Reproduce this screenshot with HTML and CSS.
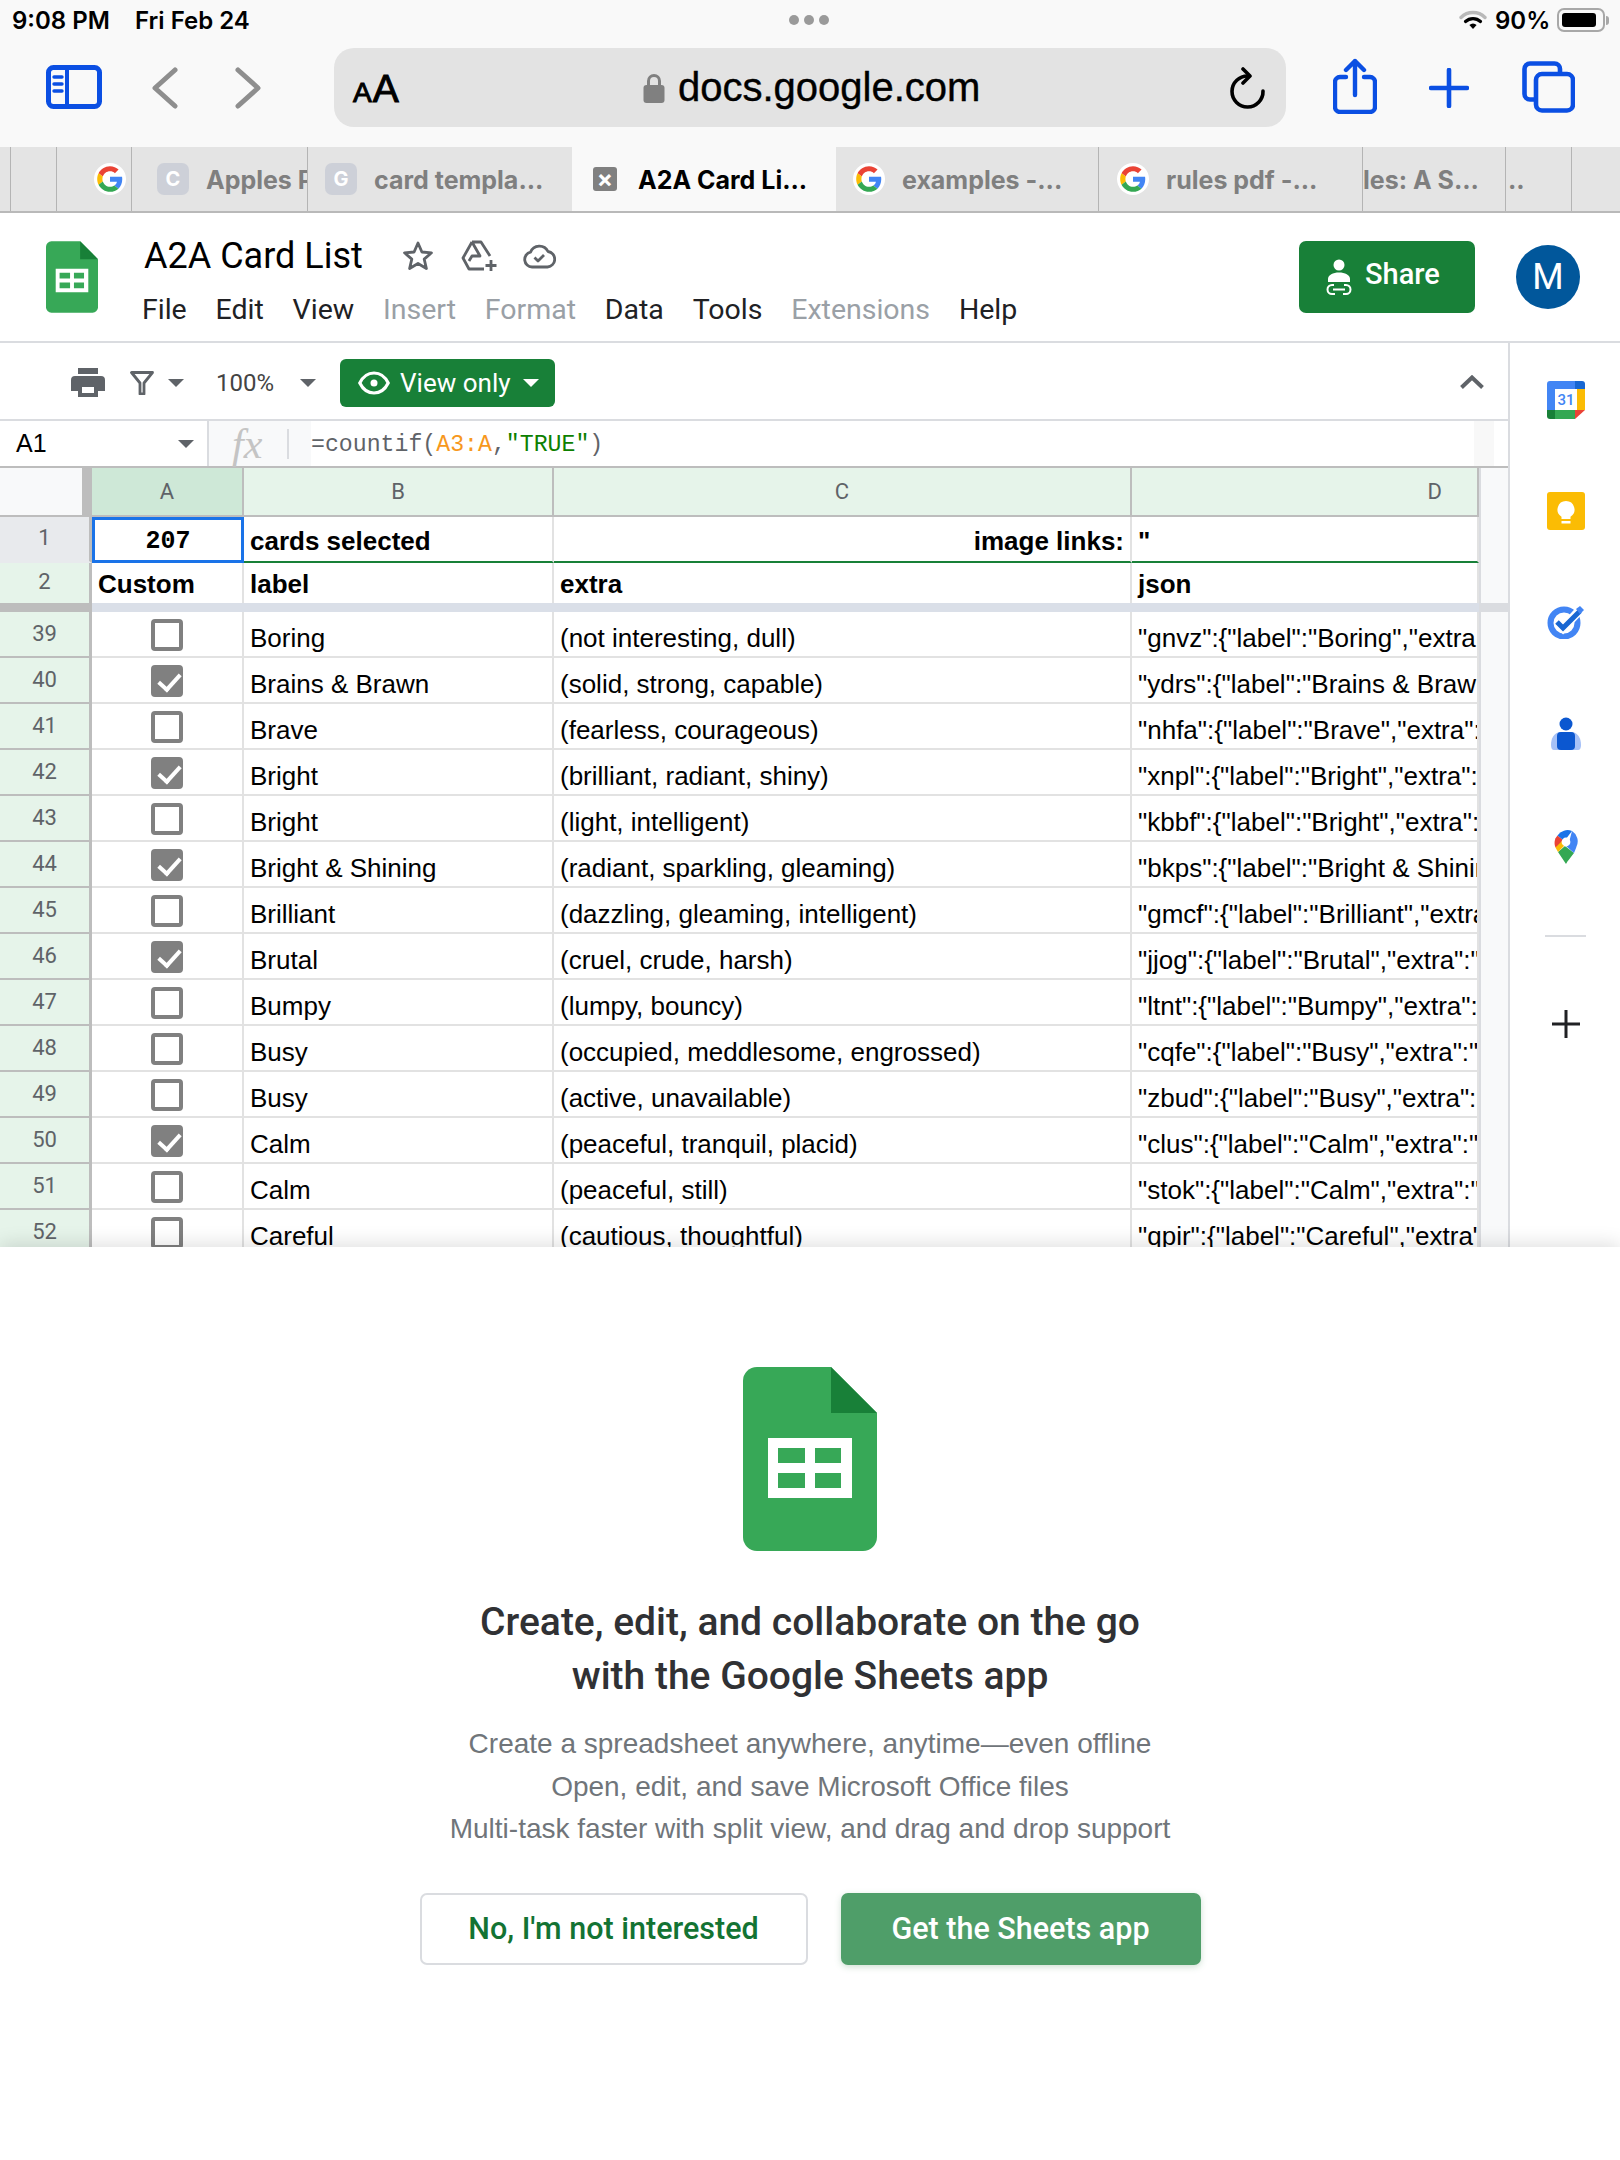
FILE: index.html
```html
<!DOCTYPE html>
<html lang="en">
<head>
  <meta charset="UTF-8">
  <title>A2A Card List</title>
  <link rel="stylesheet" href="styles.css">
</head>
<body>
  <svg class="defs" width="0" height="0">
    <symbol id="g-logo" viewBox="-6 -6 60 60">
      <circle cx="24" cy="24" r="30" fill="#fff"/>
      <path fill="#EA4335" d="M24 9.5c3.54 0 6.71 1.22 9.21 3.6l6.85-6.85C35.9 2.38 30.47 0 24 0 14.62 0 6.51 5.38 2.56 13.22l7.98 6.19C12.43 13.72 17.74 9.5 24 9.5z"/>
      <path fill="#4285F4" d="M46.98 24.55c0-1.57-.15-3.09-.38-4.55H24v9.02h12.94c-.58 2.96-2.26 5.48-4.78 7.18l7.73 6c4.51-4.18 7.09-10.36 7.09-17.65z"/>
      <path fill="#FBBC05" d="M10.53 28.59c-.48-1.45-.76-2.99-.76-4.59s.27-3.14.76-4.59l-7.98-6.19C.92 16.46 0 20.12 0 24c0 3.88.92 7.54 2.56 10.78l7.97-6.19z"/>
      <path fill="#34A853" d="M24 48c6.48 0 11.93-2.13 15.89-5.81l-7.73-6c-2.15 1.45-4.92 2.3-8.16 2.3-6.26 0-11.57-4.22-13.47-9.91l-7.98 6.19C6.51 42.62 14.62 48 24 48z"/>
    </symbol>
    <symbol id="sheets-logo" viewBox="0 0 134 184">
      <path fill="#37a857" d="M88 0H14A14 14 0 0 0 0 14v156a14 14 0 0 0 14 14h106a14 14 0 0 0 14-14V46z"/>
      <path fill="#188038" d="M88 0l46 46H88z"/>
      <path fill="#fff" fill-rule="evenodd" d="M25 71h84v60H25zM35 81v15h27V81zM72 81v15h26V81zM35 106v15h27v-15zM72 106v15h26v-15z"/>
    </symbol>
  </svg>

  <div class="page">
    <div class="statusbar">
      <span class="time">9:08 PM</span>
      <span class="date">Fri Feb 24</span>
      <span class="dots"><i></i><i></i><i></i></span>
      <svg class="wifi" width="28" height="20" viewBox="0 0 28 20" fill="none" stroke-linecap="round">
        <path d="M2 7.5a17 17 0 0 1 24 0" stroke="#b9b9b9" stroke-width="3.4"/>
        <path d="M6.5 11.5a11 11 0 0 1 15 0" stroke="#000" stroke-width="3.2"/>
        <path d="M14 19l-3.6-4a5 5 0 0 1 7.2 0z" fill="#000"/>
      </svg>
      <span class="pct">90%</span>
      <span class="battery"><i></i></span>
      <span class="nub"></span>
    </div>

    <div class="toolbar">
      <svg class="ic-side" width="56" height="44" viewBox="0 0 56 44" fill="none" stroke="#0b4fe3">
        <rect x="2.5" y="2.5" width="51" height="39" rx="5" stroke-width="5"/>
        <path d="M21 3v38" stroke-width="4"/>
        <path d="M8 12h8M8 19h8M8 26h8" stroke-width="3.4" stroke-linecap="round"/>
      </svg>
      <svg class="ic-back" width="26" height="42" viewBox="0 0 26 42" fill="none" stroke="#8e8e8e" stroke-width="5" stroke-linecap="round" stroke-linejoin="round">
        <path d="M23 3L3 21l20 18"/>
      </svg>
      <svg class="ic-fwd" width="26" height="42" viewBox="0 0 26 42" fill="none" stroke="#8e8e8e" stroke-width="5" stroke-linecap="round" stroke-linejoin="round">
        <path d="M3 3l20 18L3 39"/>
      </svg>
      <div class="urlbar">
        <span class="aa"><small>A</small>A</span>
        <svg class="lock" width="22" height="30" viewBox="0 0 22 30">
          <path d="M5.5 13V8a5.5 5.5 0 0 1 11 0v5" fill="none" stroke="#808080" stroke-width="3"/>
          <rect x="0.5" y="12" width="21" height="18" rx="3" fill="#808080"/>
        </svg>
        <span class="host">docs.google.com</span>
        <svg class="reload" width="36" height="42" viewBox="0 0 36 42" fill="none" stroke="#000" stroke-width="3.6" stroke-linecap="round" stroke-linejoin="round">
          <path d="M18 9A15.5 15.5 0 1 0 33 24"/>
          <path d="M13 2l7 7-7 7"/>
        </svg>
      </div>
      <svg class="ic-share" width="44" height="56" viewBox="0 0 44 56" fill="none" stroke="#0b4fe3" stroke-width="4.4" stroke-linecap="round" stroke-linejoin="round">
        <path d="M13 19H7a5 5 0 0 0-5 5v25a5 5 0 0 0 5 5h30a5 5 0 0 0 5-5V24a5 5 0 0 0-5-5h-6"/>
        <path d="M22 37V3M13 12l9-9 9 9"/>
      </svg>
      <svg class="ic-plus" width="40" height="40" viewBox="0 0 40 40" stroke="#0b4fe3" stroke-width="4.6" stroke-linecap="round">
        <path d="M20 2v36M2 20h36"/>
      </svg>
      <svg class="ic-tabs" width="53" height="52" viewBox="0 0 53 52" fill="none" stroke="#0b4fe3" stroke-width="4.6" stroke-linejoin="round">
        <path d="M38 11V8a5.500 5.500 0 0 0-5.500-5.500H8A5.500 5.500 0 0 0 2.500 8v25A5.500 5.500 0 0 0 8 38.500h5"/>
        <rect x="14" y="13" width="37" height="36.500" rx="6"/>
      </svg>
    </div>

    <div class="tabs">
      <div class="tab t0"></div>
      <div class="tab t1"><i class="red-sliver"></i></div>
      <div class="tab t2"><svg class="fav"><use href="#g-logo"/></svg></div>
      <div class="tab t3"><span class="fav-box">C</span><span class="tab-label">Apples P</span></div>
      <div class="tab t4"><span class="fav-box">G</span><span class="tab-label">card templa...</span></div>
      <div class="tab tab-active"><span class="fav-x">×</span><span class="tab-label">A2A Card Li...</span></div>
      <div class="tab t6"><svg class="fav"><use href="#g-logo"/></svg><span class="tab-label">examples -...</span></div>
      <div class="tab t7"><svg class="fav"><use href="#g-logo"/></svg><span class="tab-label">rules pdf -...</span></div>
      <div class="tab t8"><span class="tab-label">les: A S...</span></div>
      <div class="tab t9"><span class="tab-label">..</span></div>
      <div class="tab t10"></div>
    </div>

    <div class="docbar">
      <svg class="doc-logo" width="52" height="72"><use href="#sheets-logo"/></svg>
      <div class="doc-main">
        <div class="doc-title-row">
          <span class="doc-title">A2A Card List</span>
          <svg class="ic-star" width="32" height="32" viewBox="0 0 32 32" fill="none" stroke="#5f6368" stroke-width="2.8" stroke-linejoin="round">
            <path d="M16 3l3.900 9 9.600.8-7.300 6.300 2.200 9.400L16 23.500l-8.400 5 2.200-9.400L2.500 12.800l9.600-.8z"/>
          </svg>
          <svg class="ic-drive" width="38" height="32" viewBox="0 0 38 32" fill="none" stroke="#5f6368" stroke-width="2.800" stroke-linejoin="round">
            <path d="M11 2h9l9 14M11 2L2 18l6 11h15M11 2l8 14h-8l-3 5"/>
            <path d="M30 20v11M24.500 25.500h11"/>
          </svg>
          <svg class="ic-cloud" width="33" height="26" viewBox="0 0 33 26" fill="none" stroke="#5f6368" stroke-width="2.800" stroke-linejoin="round">
            <path d="M9 24a7.500 7.500 0 0 1-1.500-14.800A9.500 9.500 0 0 1 25 8.500 7.800 7.800 0 0 1 24.500 24z"/>
            <path d="M11.500 14.500l3.500 3.500 6-6"/>
          </svg>
        </div>
        <div class="menu">
          <span>File</span><span>Edit</span><span>View</span>
          <span class="off">Insert</span><span class="off">Format</span>
          <span>Data</span><span>Tools</span>
          <span class="off">Extensions</span><span>Help</span>
        </div>
      </div>
      <div class="share-btn">
        <svg width="28" height="36" viewBox="0 0 28 36" fill="#fff">
          <circle cx="14" cy="6" r="5.500"/>
          <path d="M3 23v-3c0-4 5-6.500 11-6.500s11 2.500 11 6.500v3z"/>
          <path d="M9 26H7a4.500 4.500 0 0 0 0 9h3M19 26h2a4.500 4.500 0 0 1 0 9h-3M8 30.500h12" fill="none" stroke="#fff" stroke-width="2"/>
        </svg>
        <span>Share</span>
      </div>
      <div class="avatar">M</div>
    </div>

    <div class="main">
      <div class="sheet">
        <div class="actions">
          <svg class="ic-print" width="34" height="29" viewBox="0 0 34 29" fill="#5f6368">
            <path d="M7 0h20v6H7z"/>
            <path fill-rule="evenodd" d="M4 8h26a4 4 0 0 1 4 4v11h-7v6H7v-6H0V12a4 4 0 0 1 4-4zM11 19v6h12v-6z"/>
          </svg>
          <svg class="ic-filter" width="24" height="24" viewBox="0 0 24 24" fill="none" stroke="#5f6368" stroke-width="2.800">
            <path d="M1.500 1.500h21L14 12v11h-4V12z" stroke-linejoin="round"/>
          </svg>
          <span class="caret caret-a"></span>
          <span class="zoom-val">100%</span>
          <span class="caret caret-b"></span>
          <div class="view-btn">
            <svg width="32" height="24" viewBox="0 0 32 24" fill="none" stroke="#fff" stroke-width="3.200">
              <path d="M1.800 12C5 5.500 10 2 16 2s11 3.500 14.200 10C27 18.500 22 22 16 22S5 18.500 1.800 12z"/>
              <circle cx="16" cy="12" r="3.500" fill="#fff" stroke="none"/>
            </svg>
            <span>View only</span>
            <i class="caret caret-w"></i>
          </div>
          <svg class="ic-up" width="24" height="14" viewBox="0 0 24 14" fill="none" stroke="#5f6368" stroke-width="4">
            <path d="M1.500 12.500L12 2.500l10.500 10"/>
          </svg>
        </div>

        <div class="formula">
          <span class="namebox">A1</span>
          <span class="caret caret-n"></span>
          <span class="fx-box"><i class="fx">fx</i><i class="fx-sep"></i></span>
          <span class="expr">=countif(<b>A3:A</b>,<em>"TRUE"</em>)</span>
          <span class="fbar-scroll"></span>
        </div>

        <div class="grid">
          <div class="row row-head">
            <div class="corner"><i></i></div>
            <div class="ch ch-on">A</div>
            <div class="ch">B</div>
            <div class="ch">C</div>
            <div class="ch ch-d">D</div>
            <div class="gutter"></div>
          </div>
          <div class="row row-1">
            <div class="rh rh-1">1</div>
            <div class="cell bold sel">207</div>
            <div class="cell bold">cards selected</div>
            <div class="cell bold right">image links:</div>
            <div class="cell bold">"</div>
            <div class="gutter"></div>
          </div>
          <div class="row row-2">
            <div class="rh">2</div>
            <div class="cell bold">Custom</div>
            <div class="cell bold">label</div>
            <div class="cell bold">extra</div>
            <div class="cell bold">json</div>
            <div class="gutter"></div>
          </div>
          <div class="freeze"><i></i><b></b><u></u></div>

          <div class="row"><div class="rh">39</div><div class="cell cb"><span class="box"></span></div><div class="cell">Boring</div><div class="cell">(not interesting, dull)</div><div class="cell">"gnvz":{"label":"Boring","extra</div><div class="gutter"></div></div>
          <div class="row"><div class="rh">40</div><div class="cell cb"><span class="box on"></span></div><div class="cell">Brains &amp; Brawn</div><div class="cell">(solid, strong, capable)</div><div class="cell">"ydrs":{"label":"Brains &amp; Brawn</div><div class="gutter"></div></div>
          <div class="row"><div class="rh">41</div><div class="cell cb"><span class="box"></span></div><div class="cell">Brave</div><div class="cell">(fearless, courageous)</div><div class="cell">"nhfa":{"label":"Brave","extra":</div><div class="gutter"></div></div>
          <div class="row"><div class="rh">42</div><div class="cell cb"><span class="box on"></span></div><div class="cell">Bright</div><div class="cell">(brilliant, radiant, shiny)</div><div class="cell">"xnpl":{"label":"Bright","extra":</div><div class="gutter"></div></div>
          <div class="row"><div class="rh">43</div><div class="cell cb"><span class="box"></span></div><div class="cell">Bright</div><div class="cell">(light, intelligent)</div><div class="cell">"kbbf":{"label":"Bright","extra":</div><div class="gutter"></div></div>
          <div class="row"><div class="rh">44</div><div class="cell cb"><span class="box on"></span></div><div class="cell">Bright &amp; Shining</div><div class="cell">(radiant, sparkling, gleaming)</div><div class="cell">"bkps":{"label":"Bright &amp; Shining</div><div class="gutter"></div></div>
          <div class="row"><div class="rh">45</div><div class="cell cb"><span class="box"></span></div><div class="cell">Brilliant</div><div class="cell">(dazzling, gleaming, intelligent)</div><div class="cell">"gmcf":{"label":"Brilliant","extra</div><div class="gutter"></div></div>
          <div class="row"><div class="rh">46</div><div class="cell cb"><span class="box on"></span></div><div class="cell">Brutal</div><div class="cell">(cruel, crude, harsh)</div><div class="cell">"jjog":{"label":"Brutal","extra":"</div><div class="gutter"></div></div>
          <div class="row"><div class="rh">47</div><div class="cell cb"><span class="box"></span></div><div class="cell">Bumpy</div><div class="cell">(lumpy, bouncy)</div><div class="cell">"ltnt":{"label":"Bumpy","extra":</div><div class="gutter"></div></div>
          <div class="row"><div class="rh">48</div><div class="cell cb"><span class="box"></span></div><div class="cell">Busy</div><div class="cell">(occupied, meddlesome, engrossed)</div><div class="cell">"cqfe":{"label":"Busy","extra":"</div><div class="gutter"></div></div>
          <div class="row"><div class="rh">49</div><div class="cell cb"><span class="box"></span></div><div class="cell">Busy</div><div class="cell">(active, unavailable)</div><div class="cell">"zbud":{"label":"Busy","extra":</div><div class="gutter"></div></div>
          <div class="row"><div class="rh">50</div><div class="cell cb"><span class="box on"></span></div><div class="cell">Calm</div><div class="cell">(peaceful, tranquil, placid)</div><div class="cell">"clus":{"label":"Calm","extra":"</div><div class="gutter"></div></div>
          <div class="row"><div class="rh">51</div><div class="cell cb"><span class="box"></span></div><div class="cell">Calm</div><div class="cell">(peaceful, still)</div><div class="cell">"stok":{"label":"Calm","extra":"</div><div class="gutter"></div></div>
          <div class="row"><div class="rh">52</div><div class="cell cb"><span class="box"></span></div><div class="cell">Careful</div><div class="cell">(cautious, thoughtful)</div><div class="cell">"qpir":{"label":"Careful","extra"</div><div class="gutter"></div></div>
        </div>
      </div>

      <div class="rail">
        <svg class="rail-cal" width="38" height="38" viewBox="0 0 38 38">
          <path fill="#4285f4" d="M3 0h25v8H8v21H0V3a3 3 0 0 1 3-3z"/>
          <path fill="#1967d2" d="M28 0h7a3 3 0 0 1 3 3v5H28z"/>
          <path fill="#fbbc04" d="M30 8h8v21h-8z"/>
          <path fill="#34a853" d="M8 29h20v9H8z"/>
          <path fill="#188038" d="M0 29h8v9H3a3 3 0 0 1-3-3z"/>
          <path fill="#ea4335" d="M28 38v-9h10z"/>
          <text x="19" y="24" text-anchor="middle" class="cal-num">31</text>
        </svg>
        <svg class="rail-keep" width="38" height="38" viewBox="0 0 38 38">
          <rect width="38" height="38" rx="3" fill="#fbbc04"/>
          <path fill="#fff" d="M19 9a8.500 8.500 0 0 0-4.500 15.700V27h9v-2.300A8.500 8.500 0 0 0 19 9zM14.500 29h9v2.500h-9z"/>
        </svg>
        <svg class="rail-tasks" width="38" height="34" viewBox="0 0 38 34" fill="none">
          <circle cx="17" cy="18" r="13.500" stroke="#4285f4" stroke-width="6"/>
          <path d="M10 17l6 6L32 6" stroke="#fff" stroke-width="9"/>
          <path d="M10 17l6 6L33 6" stroke="#1967d2" stroke-width="5"/>
          <path d="M29 4l4-3 4 4-4 4z" fill="#4285f4"/>
        </svg>
        <svg class="rail-people" width="30" height="33" viewBox="0 0 30 33">
          <path fill="#a6c1f7" d="M8 15h14c5 1.500 8 6 8 13 0 3-1 5-3 5H3c-2 0-3-2-3-5 0-7 3-11.500 8-13z"/>
          <circle cx="15" cy="7" r="6.500" fill="#0b57d0"/>
          <path fill="#0b57d0" d="M10 15h10a4 4 0 0 1 4 4v10a4 4 0 0 1-4 4H10a4 4 0 0 1-4-4V19a4 4 0 0 1 4-4z"/>
        </svg>
        <svg class="rail-maps" width="24" height="34" viewBox="0 0 24 34">
          <path fill="#34a853" d="M4 22l8 12c1.500-3 5-7 8-11l-9-7z"/>
          <path fill="#fbbc04" d="M1.500 17.500L4 22l7.500-7.500L6 9z"/>
          <path fill="#ea4335" d="M1.500 17.500C0 14 0 9 3.500 5.500L9 10z"/>
          <path fill="#1a73e8" d="M3.500 5.500A12 12 0 0 1 18 1l-6.500 8.500-2.500.5z"/>
          <path fill="#4285f4" d="M18 1a12 12 0 0 1 4.500 15.500c-.5 2-1.500 4-2.500 6.500l-8-7c3 0 4.500-3 3.500-5.500z"/>
          <circle cx="12" cy="12" r="4.400" fill="#fff"/>
        </svg>
        <i class="rail-sep"></i>
        <svg class="rail-plus" width="28" height="28" viewBox="0 0 28 28" stroke="#202124" stroke-width="3">
          <path d="M14 0v28M0 14h28"/>
        </svg>
      </div>
    </div>

    <div class="promo">
      <svg class="promo-logo" width="134" height="184"><use href="#sheets-logo"/></svg>
      <h2>Create, edit, and collaborate on the go<br>with the Google Sheets app</h2>
      <p>Create a spreadsheet anywhere, anytime—even offline<br>Open, edit, and save Microsoft Office files<br>Multi-task faster with split view, and drag and drop support</p>
      <div class="promo-actions">
        <span class="btn btn-no">No, I'm not interested</span>
        <span class="btn btn-get">Get the Sheets app</span>
      </div>
    </div>
  </div>
</body>
</html>
```

FILE: styles.css
```css
* {
  box-sizing: border-box;
}
body {
  margin: 0;
  background: #fff;
  font-family: "Liberation Sans", Arial, sans-serif;
}
.defs {
  display: block;
  height: 0;
}
.page {
  width: 1620px;
  height: 2160px;
  overflow: hidden;
  display: flex;
  flex-direction: column;
}

/* ios status bar + safari chrome */
.statusbar {
  height: 40px;
  background: #f9f9f9;
  display: flex;
  align-items: center;
  padding: 0 10px 0 12px;
  font-family: Inter, sans-serif;
  font-weight: 600;
  font-size: 24px;
  color: #000;
}
.time {
  width: 100px;
  white-space: nowrap;
}
.date {
  width: 118px;
  margin-left: 23px;
  white-space: nowrap;
}
.dots {
  display: flex;
  gap: 5px;
  margin-left: 536px;
}
.dots i {
  width: 10px;
  height: 10px;
  border-radius: 50%;
  background: #9a9a9a;
}
.wifi {
  margin-left: 630px;
}
.pct {
  width: 55px;
  margin-left: 8px;
  white-space: nowrap;
}
.battery {
  width: 48px;
  height: 24px;
  margin-left: 7px;
  border: 2px solid #a8a8a8;
  border-radius: 7px;
  padding: 3px;
}
.battery i {
  display: block;
  height: 100%;
  width: 90%;
  background: #000;
  border-radius: 3px;
}
.nub {
  width: 3px;
  height: 9px;
  margin-left: 1px;
  background: #a8a8a8;
  border-radius: 0 3px 3px 0;
}
.toolbar {
  height: 107px;
  background: #f9f9f9;
  display: flex;
  align-items: flex-start;
}
.ic-side {
  margin: 25px 0 0 46px;
}
.ic-back {
  margin: 27px 0 0 50px;
}
.ic-fwd {
  margin: 27px 0 0 57px;
}
.urlbar {
  width: 952px;
  height: 79px;
  margin: 8px 0 0 73px;
  background: #e3e3e3;
  border-radius: 20px;
  display: flex;
  align-items: center;
  padding-left: 19px;
}
.aa {
  font-size: 39px;
  width: 47px;
  padding-top: 2px;
  color: #000;
  white-space: nowrap;
  -webkit-text-stroke: 1px #000;
}
.aa small {
  font-size: 28px;
  margin-right: 1px;
}
.lock {
  margin-left: 243px;
}
.host {
  font-size: 40px;
  margin-left: 13px;
  color: #000;
  -webkit-text-stroke: 0.4px #000;
}
.reload {
  margin-left: 250px;
}
.ic-share {
  margin: 18px 0 0 47px;
}
.ic-plus {
  margin: 28px 0 0 52px;
}
.ic-tabs {
  margin: 21px 0 0 53px;
}

.tabs {
  height: 66px;
  display: flex;
  background: #e4e4e4;
  border-bottom: 2px solid #b9b9b9;
}
.tab {
  flex: none;
  display: flex;
  align-items: center;
  height: 64px;
  overflow: hidden;
  white-space: nowrap;
  border-right: 1px solid #b4b4b4;
  font-family: Inter, sans-serif;
  font-weight: 700;
  font-size: 25px;
  color: #7f7f7f;
}
.t0 { width: 11px; }
.t1 { width: 46px; padding-left: 45px; }
.t2 { width: 75px; padding-left: 37px; }
.t3 { width: 176px; padding-left: 25px; }
.t4 { width: 264px; padding-left: 17px; border-right: 0; }
.tab-active { width: 264px; padding-left: 21px; border-right: 0; background: #f9f9f9; color: #000; }
.t6 { width: 263px; padding-left: 17px; }
.t7 { width: 264px; padding-left: 18px; }
.t8 { width: 143px; }
.t9 { width: 66px; padding-left: 2px; }
.t10 { flex: 1; border-right: 0; }
.red-sliver {
  width: 3px;
  height: 22px;
  background: #ea4335;
  border-radius: 2px 0 0 2px;
}
.fav {
  width: 32px;
  height: 32px;
  flex: none;
}
.fav-box {
  width: 32px;
  height: 32px;
  flex: none;
  border-radius: 7px;
  background: #cdd0d8;
  color: #fff;
  text-align: center;
  line-height: 32px;
  font-size: 20px;
}
.fav-x {
  width: 24px;
  height: 24px;
  flex: none;
  border-radius: 3px;
  background: #808080;
  color: #fff;
  text-align: center;
  line-height: 23px;
  font-size: 24px;
}
.tab-label {
  margin-left: 17px;
  padding-top: 2px;
}
.t8 .tab-label, .t9 .tab-label {
  margin-left: 0;
}
.tab-active .tab-label {
  margin-left: 21px;
}

/* docs title bar */
.docbar {
  height: 130px;
  display: flex;
  align-items: flex-start;
  background: #fff;
  border-bottom: 2px solid #dadce0;
  font-family: Roboto, sans-serif;
}
.doc-logo {
  margin: 28px 0 0 46px;
  flex: none;
}
.doc-main {
  width: 1156px;
  margin-left: 45px;
}
.doc-title-row {
  display: flex;
  align-items: center;
  height: 58px;
  margin-top: 14px;
}
.doc-title {
  font-size: 36px;
  color: #000;
  margin-left: 1px;
  width: 258px;
}
.ic-drive {
  margin-left: 27px;
}
.ic-cloud {
  margin-left: 24px;
}
.menu {
  display: flex;
  margin: 8px 0 0 -1px;
  gap: 28.800px;
  font-size: 28.500px;
  color: #202124;
}
.menu .off {
  color: #9aa0a6;
}
.share-btn {
  width: 176px;
  height: 72px;
  margin-top: 28px;
  flex: none;
  background: #188038;
  border-radius: 7px;
  display: flex;
  align-items: center;
  padding-left: 26px;
  color: #fff;
  font-size: 29px;
  font-weight: 500;
}
.share-btn span {
  margin: -6px 0 0 12px;
}
.avatar {
  width: 64px;
  height: 64px;
  margin: 32px 0 0 41px;
  flex: none;
  border-radius: 50%;
  background: #01579b;
  color: #fff;
  font-size: 36px;
  text-align: center;
  line-height: 64px;
}

.main {
  height: 904px;
  display: flex;
  overflow: hidden;
}
.sheet {
  width: 1510px;
  flex: none;
  border-right: 2px solid #dadce0;
}

.actions {
  height: 78px;
  display: flex;
  align-items: center;
  padding-top: 3px;
  border-bottom: 2px solid #dadce0;
  font-family: Roboto, sans-serif;
}
.ic-print {
  margin-left: 71px;
}
.ic-filter {
  margin-left: 25px;
}
.caret {
  display: block;
  width: 0;
  height: 0;
  flex: none;
  border-left: 8px solid transparent;
  border-right: 8px solid transparent;
  border-top: 8px solid #5f6368;
}
.caret-a {
  margin-left: 14px;
}
.zoom-val {
  margin-left: 32px;
  font-size: 24px;
  color: #444;
}
.caret-b {
  margin-left: 26px;
}
.view-btn {
  width: 215px;
  height: 48px;
  margin-left: 24px;
  background: #188038;
  border-radius: 6px;
  display: flex;
  align-items: center;
  padding-left: 18px;
  color: #fff;
  font-size: 26px;
}
.view-btn span {
  margin-left: 10px;
}
.caret-w {
  margin-left: 12px;
  border-top-color: #fff;
}
.ic-up {
  margin-left: 905px;
  margin-top: -2px;
}

.formula {
  height: 47px;
  display: flex;
  align-items: center;
  border-bottom: 2px solid #bdbdbd;
}
.namebox {
  width: 178px;
  padding-left: 16px;
  font-size: 25px;
  color: #000;
}
.fx-box {
  width: 104px;
  height: 45px;
  margin-left: 13px;
  background: #f8f9fa;
  border-left: 2px solid #dadce0;
  display: flex;
  align-items: center;
  padding-left: 23px;
}
.fx {
  width: 37px;
  font-family: "Liberation Serif", serif;
  font-style: italic;
  font-size: 42px;
  color: #c4c4c4;
}
.fx-sep {
  width: 2px;
  height: 30px;
  margin-left: 18px;
  background: #dadce0;
}
.expr {
  padding-top: 2px;
  font-family: "Liberation Mono", monospace;
  font-size: 23.200px;
  color: #5f6368;
}
.expr b {
  font-weight: 400;
  color: #f7981d;
}
.expr em {
  font-style: normal;
  color: #0d8000;
}
.fbar-scroll {
  width: 20px;
  height: 45px;
  margin-left: 871px;
  background: #f8f8f8;
}

/* spreadsheet */
.row {
  display: grid;
  grid-template-columns: 92px 152px 310px 578px 347px 29px;
  height: 46px;
}
.rh, .ch {
  display: flex;
  align-items: center;
  justify-content: center;
  font-family: Roboto, sans-serif;
  font-size: 22px;
  color: #5f6368;
}
.rh {
  background: #e6f4ea;
  border-right: 3px solid #bdbdbd;
  border-bottom: 2px solid #bdbdbd;
  padding-bottom: 2px;
}
.rh-1 {
  background: #e8eaed;
}
.corner {
  background: #f8f9fa;
  border-bottom: 2px solid #bdbdbd;
}
.corner i {
  display: block;
  width: 10px;
  height: 100%;
  margin-left: 82px;
  background: #bdbdbd;
}
.ch {
  background: #e6f4ea;
  border-right: 2px solid #bdbdbd;
  border-bottom: 2px solid #bdbdbd;
}
.ch-on {
  background: #cee8d7;
}
.ch-d {
  justify-content: flex-end;
  padding-right: 35px;
}
.gutter {
  background: #f8f9fa;
  border-left: 2px solid #dadce0;
  overflow: hidden;
}
.row-head {
  height: 49px;
}
.cell {
  display: flex;
  align-items: flex-end;
  padding: 0 0 3px 6px;
  font-size: 26px;
  line-height: 30px;
  color: #000;
  white-space: nowrap;
  overflow: hidden;
  border-right: 2px solid #e2e2e2;
  border-bottom: 2px solid #e2e2e2;
}
.bold {
  font-weight: 700;
}
.right {
  justify-content: flex-end;
  padding-right: 6px;
}
.row-1 .cell {
  border-bottom-color: #188038;
  padding-bottom: 5px;
}
.row-1 .rh {
  border-bottom-color: #e8eaed;
  padding-bottom: 4px;
}
.row-1 .sel {
  justify-content: center;
  align-items: center;
  padding: 4px 0 0;
  font-family: "Liberation Mono", monospace;
  font-size: 25px;
  border: 3px solid #1a73e8;
}
.row-2 {
  height: 40px;
}
.row-2 .rh {
  border-bottom: 0;
  padding-bottom: 4px;
}
.row-2 .cell {
  border-bottom: 0;
  padding-bottom: 4px;
}
.freeze {
  display: grid;
  grid-template-columns: 92px 1387px 29px;
  height: 9px;
}
.freeze i {
  background: #bdbdbd;
}
.freeze b {
  background: #dadfe8;
}
.freeze u {
  background: #dadce0;
}
.cell.cb {
  justify-content: center;
  align-items: center;
  padding: 1px 0 0;
}
.box {
  width: 32px;
  height: 32px;
  border: 4px solid #808080;
  border-radius: 4px;
}
.box.on {
  background: #808080;
  position: relative;
}
.box.on::after {
  content: "";
  position: absolute;
  left: 8px;
  top: 0;
  width: 9px;
  height: 18px;
  border-right: 4px solid #fff;
  border-bottom: 4px solid #fff;
  transform: rotate(42deg);
}

/* right side panel */
.rail {
  flex: 1;
  background: #fff;
  display: flex;
  flex-direction: column;
  align-items: center;
  padding: 38px 0 0 1px;
}
.cal-num {
  font-family: Roboto, sans-serif;
  font-size: 15px;
  font-weight: 500;
  fill: #4285f4;
}
.rail-keep {
  margin-top: 73px;
}
.rail-tasks {
  margin-top: 75px;
}
.rail-people {
  margin-top: 78px;
}
.rail-maps {
  margin-top: 80px;
}
.rail-sep {
  width: 41px;
  height: 2px;
  margin-top: 71px;
  background: #dadce0;
}
.rail-plus {
  margin-top: 73px;
}

/* install prompt */
.promo {
  flex: 1;
  position: relative;
  background: #fff;
  box-shadow: 0 -3px 18px rgba(0, 0, 0, 0.13);
  display: flex;
  flex-direction: column;
  align-items: center;
  font-family: Roboto, sans-serif;
  text-align: center;
}
.promo-logo {
  margin-top: 120px;
  flex: none;
}
.promo h2 {
  margin: 44px 0 0;
  font-size: 39px;
  line-height: 54px;
  font-weight: 500;
  color: #303134;
}
.promo p {
  margin: 20px 0 0;
  font-family: "Liberation Sans", sans-serif;
  font-size: 28px;
  line-height: 42.500px;
  color: #70757a;
}
.promo-actions {
  display: flex;
  gap: 33px;
  margin-top: 42px;
}
.btn {
  height: 72px;
  border-radius: 7px;
  display: flex;
  align-items: center;
  justify-content: center;
  font-size: 30.500px;
  font-weight: 500;
}
.btn-no {
  width: 388px;
  border: 2px solid #dadce0;
  color: #137333;
}
.btn-get {
  width: 360px;
  background: #4f9e69;
  color: #fff;
  box-shadow: 0 2px 6px rgba(60, 130, 80, 0.25);
}
```
